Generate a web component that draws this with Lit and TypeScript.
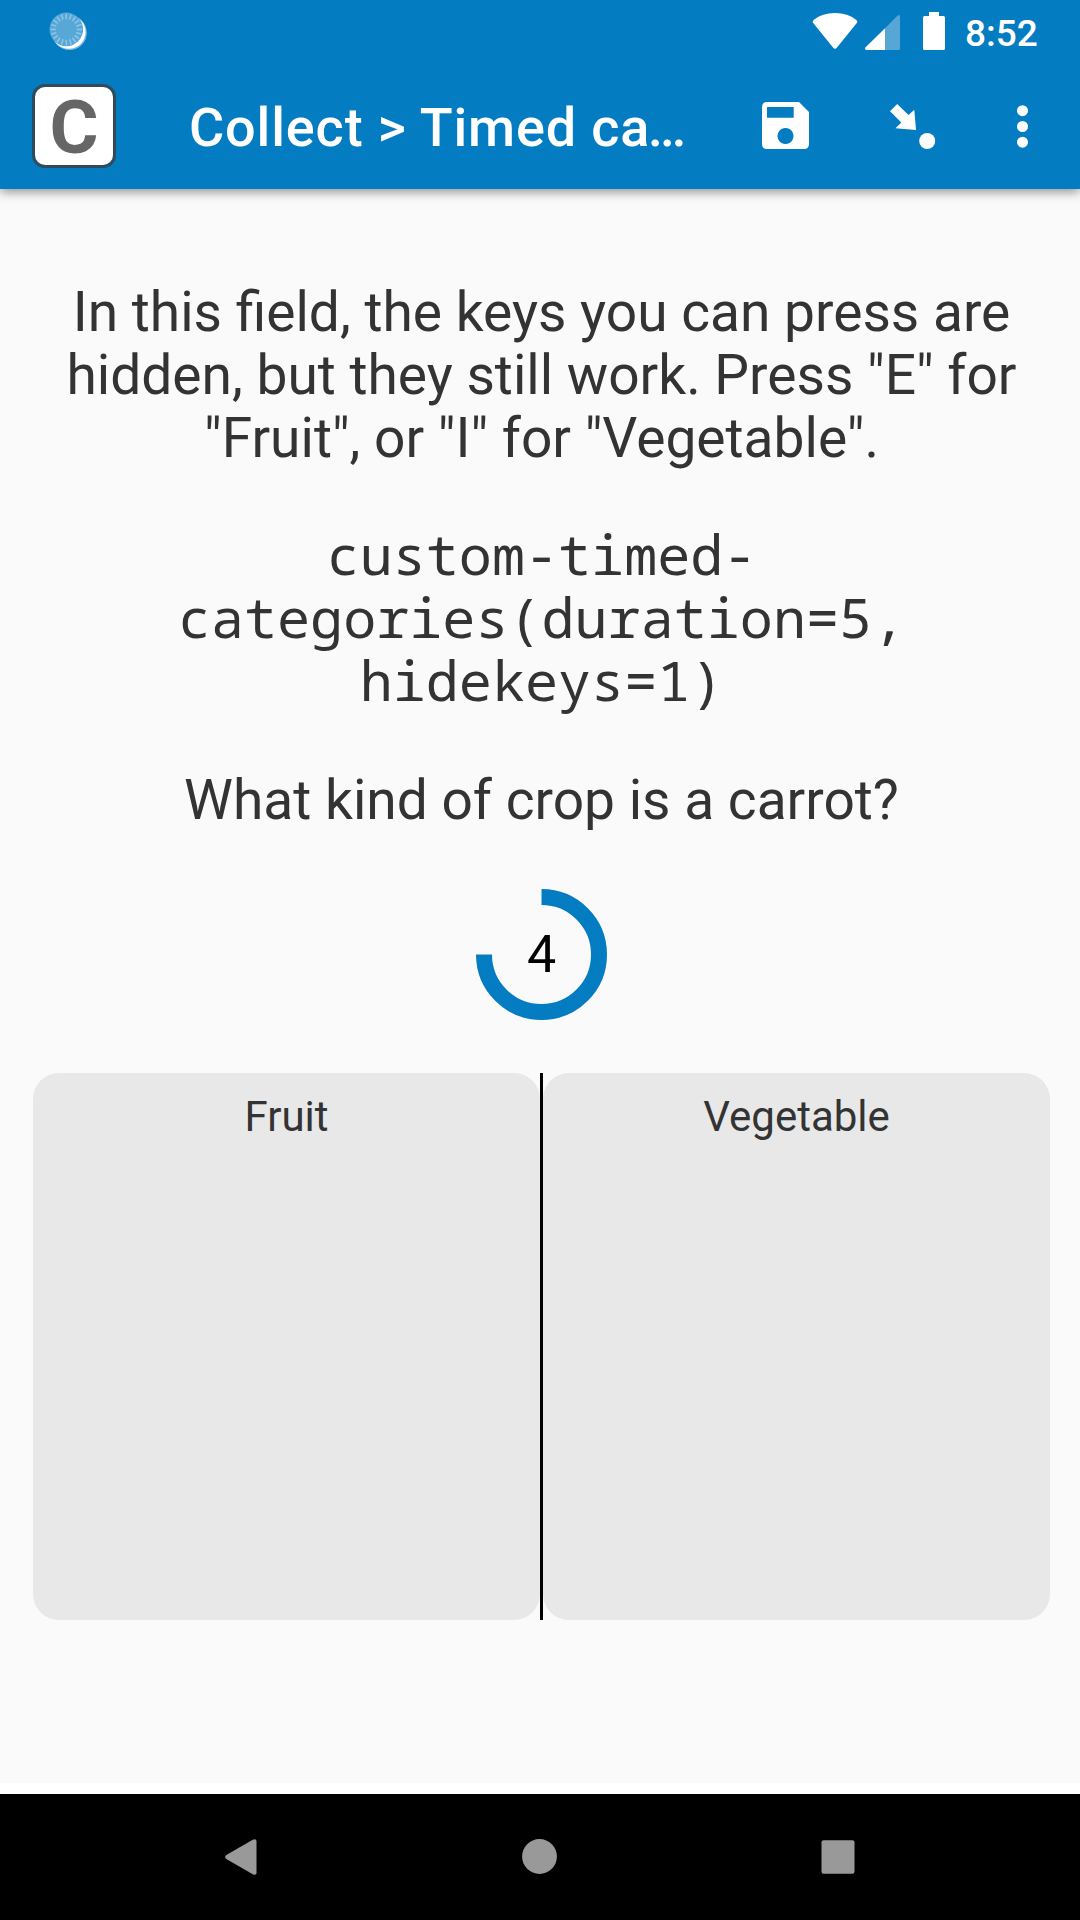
import { LitElement, html, css, svg } from "lit";
import { customElement, property } from "lit/decorators.js";

const ticks = Array.from({ length: 20 }, (_, i) => i * 18);

@customElement("status-bar")
class StatusBar extends LitElement {
  static styles = css`
    :host { display: flex; height: 72px; align-items: flex-start; color: #fff; }
    .sync { margin: 11px 0 0 48px; }
    .icons { margin-left: auto; display: flex; }
    .time {
      width: 75px; margin: 12px 40px 0 18px; white-space: nowrap;
      font: 500 37px/44px Roboto, sans-serif;
    }
    svg { display: block; }
  `;
  render() {
    return html`
      <svg class="sync" width="40" height="40" viewBox="0 0 40 40">
        <circle cx="21.5" cy="21.8" r="17.3" fill="#7dbbe0" />
        <circle cx="20.8" cy="21" r="16.8" fill="#fff" />
        <circle cx="18.3" cy="18.4" r="16.8" fill="#57a7d7" />
        ${ticks.map(
          (a) => svg`<line x1="18.3" y1="2.6" x2="18.3" y2="8" stroke="#8fc4e4" stroke-width="1.6" transform="rotate(${a} 18.3 18.4)" />`
        )}
      </svg>
      <div class="icons">
        <svg width="135" height="60" viewBox="812 0 135 60" fill="#fff">
          <path d="M812.8 22.6Q812.3 21 813.6 20Q822 13 835 13T856.400 20Q857.700 21 857.200 22.600L837 47.600Q835 50 833 47.600Z" />
          <path d="M885 28.200V50H866.500Q864 49.500 865.600 47.300Z" />
          <path d="M885 28.200L897.400 15.700Q900 14 900 16.500V48.500Q900 50 898.500 50H885Z" fill-opacity=".33" />
          <path d="M929 12h10v4h4.500q1.500 0 1.500 1.500v31q0 1.500-1.500 1.500h-19q-1.500 0-1.500-1.500v-31q0-1.500 1.500-1.500h4.500z" />
        </svg>
        <div class="time">8:52</div>
      </div>
    `;
  }
}

@customElement("app-bar")
class AppBar extends LitElement {
  static styles = css`
    :host { display: flex; height: 117px; align-items: flex-start; color: #fff; }
    .logo {
      box-sizing: border-box; width: 84px; height: 84px; margin: 12px 0 0 32px;
      border: 3px solid #2f4b5c; border-radius: 13px; background: #fff; color: #666;
      display: flex; justify-content: center;
      font: 700 75px/80px Roboto, sans-serif;
    }
    .title {
      margin: 24px 0 0 73px; width: 520px; white-space: nowrap;
      font: 500 54px/64px Roboto, sans-serif; letter-spacing: .85px;
    }
    .more { letter-spacing: 0; margin-left: -2.500px; }
    .actions { display: block; margin-left: auto; }
  `;
  render() {
    return html`
      <div class="logo">C</div>
      <div class="title">Collect &gt; Timed ca<span class="more">…</span></div>
      <svg class="actions" width="330" height="117" viewBox="750 72 330 117" fill="#fff">
        <path fill-rule="evenodd" d="M767 102H799L809 112V144Q809 149 804 149H767Q762 149 762 144V107Q762 102 767 102ZM767 107V117.700H793.700V107ZM785.500 128a8 8 0 1 0 .01 0Z" />
        <path d="M897.200 104L908.500 115L914.300 109.700L916 130L895.500 128.200L901.300 122.500L890 111.300Z" />
        <circle cx="927.200" cy="141" r="8" />
        <circle cx="1022.500" cy="110.700" r="5.500" />
        <circle cx="1022.500" cy="126.500" r="5.500" />
        <circle cx="1022.500" cy="142.200" r="5.500" />
      </svg>
    `;
  }
}

@customElement("count-down")
class CountDown extends LitElement {
  @property({ type: Number }) seconds = 4;
  static styles = css`
    :host { display: grid; width: 132px; height: 132px; place-items: center; }
    .ring, .value { grid-area: 1 / 1; }
    .ring { display: block; }
    .value { font: 400 52px/60px Roboto, sans-serif; color: #000; }
  `;
  render() {
    return html`
      <svg class="ring" width="132" height="132" viewBox="0 0 132 132">
        <path d="M65.500 8A57.500 57.500 0 1 1 8 65.500" fill="none" stroke="#037cc2" stroke-width="16" />
      </svg>
      <span class="value">${this.seconds}</span>
    `;
  }
}

@customElement("nav-bar")
class NavBar extends LitElement {
  static styles = css`
    :host { display: flex; height: 126px; background: #000; }
    svg { display: block; }
  `;
  render() {
    return html`
      <svg width="1080" height="126" viewBox="0 1794 1080 126" fill="#999">
        <path d="M226.300 1855L252.800 1839.800Q256.500 1838.200 256.500 1841.500V1872.700Q256.500 1876 252.800 1874.200L226.300 1859Q224 1857 226.300 1855Z" />
        <circle cx="539.500" cy="1856.500" r="17.400" />
        <rect x="821.500" y="1840.300" width="33" height="33.500" rx="2" />
      </svg>
    `;
  }
}

@customElement("app-root")
class AppRoot extends LitElement {
  static styles = css`
    :host {
      display: flex; flex-direction: column; box-sizing: border-box;
      width: 1080px; height: 1920px; overflow: hidden;
      background: #fafafa; color: #333; font-family: Roboto, sans-serif;
    }
    .top { background: #037cc2; box-shadow: 0 3px 10px rgba(0, 0, 0, .42); }
    .content {
      flex: 1; display: flex; flex-direction: column; align-items: center;
      padding: 92px 0 0 3px; border-bottom: 11px solid #fff;
    }
    .prompt {
      margin: 0 0 55px; text-align: center; white-space: pre;
      font-size: 55.100px; line-height: 63px;
    }
    .code {
      margin: -3px 0 58px;
      font-family: "Noto Sans Mono", "Droid Sans Mono", "DejaVu Sans Mono", monospace;
    }
    .choices {
      display: grid; grid-template-columns: 507px 3px 507px;
      width: 1017px; height: 547px; margin-top: 52px;
    }
    .choice {
      background: #e8e8e8; border-radius: 26px; padding-top: 19px;
      text-align: center; font-size: 42px; line-height: 50px;
    }
    .divider { background: #000; }
    count-down { margin-top: 2px; }
  `;
  render() {
    return html`
      <header class="top">
        <status-bar></status-bar>
        <app-bar></app-bar>
      </header>
      <main class="content">
        <p class="prompt">${'In this field, the keys you can press are\nhidden, but they still work. Press "E" for\n"Fruit", or "I" for "Vegetable".'}</p>
        <p class="prompt code">${"custom-timed-\ncategories(duration=5,\nhidekeys=1)"}</p>
        <p class="prompt">What kind of crop is a carrot?</p>
        <count-down .seconds=${4}></count-down>
        <div class="choices">
          <div class="choice">Fruit</div>
          <div class="divider"></div>
          <div class="choice">Vegetable</div>
        </div>
      </main>
      <nav-bar></nav-bar>
    `;
  }
}
